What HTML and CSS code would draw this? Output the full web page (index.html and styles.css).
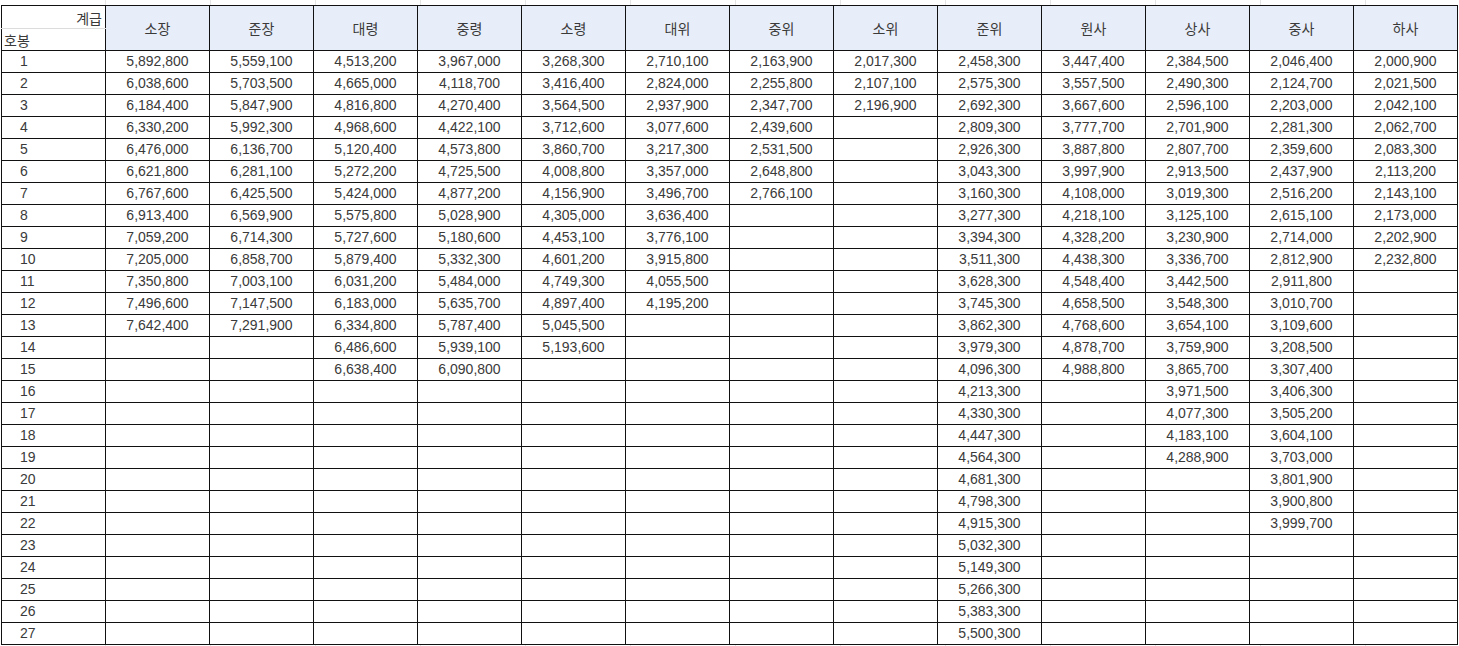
FILE: index.html
```html
<!DOCTYPE html>
<html lang="ko">
<head>
<meta charset="utf-8">
<title>봉급표</title>
<link rel="stylesheet" href="styles.css">
</head>
<body>
<table class="pay">
<colgroup>
<col class="c"><col class="c"><col class="c"><col class="c"><col class="c"><col class="c"><col class="c"><col class="c"><col class="c"><col class="c"><col class="c"><col class="c"><col class="c"><col class="c">
</colgroup>
<thead>
<tr class="h1"><th class="corner-top">계급</th><th rowspan="2">소장</th><th rowspan="2">준장</th><th rowspan="2">대령</th><th rowspan="2">중령</th><th rowspan="2">소령</th><th rowspan="2">대위</th><th rowspan="2">중위</th><th rowspan="2">소위</th><th rowspan="2">준위</th><th rowspan="2">원사</th><th rowspan="2">상사</th><th rowspan="2">중사</th><th rowspan="2">하사</th></tr>
<tr class="h2"><th class="corner-bot">호봉</th></tr>
</thead>
<tbody>
<tr><td class="n">1</td><td>5,892,800</td><td>5,559,100</td><td>4,513,200</td><td>3,967,000</td><td>3,268,300</td><td>2,710,100</td><td>2,163,900</td><td>2,017,300</td><td>2,458,300</td><td>3,447,400</td><td>2,384,500</td><td>2,046,400</td><td>2,000,900</td></tr>
<tr><td class="n">2</td><td>6,038,600</td><td>5,703,500</td><td>4,665,000</td><td>4,118,700</td><td>3,416,400</td><td>2,824,000</td><td>2,255,800</td><td>2,107,100</td><td>2,575,300</td><td>3,557,500</td><td>2,490,300</td><td>2,124,700</td><td>2,021,500</td></tr>
<tr><td class="n">3</td><td>6,184,400</td><td>5,847,900</td><td>4,816,800</td><td>4,270,400</td><td>3,564,500</td><td>2,937,900</td><td>2,347,700</td><td>2,196,900</td><td>2,692,300</td><td>3,667,600</td><td>2,596,100</td><td>2,203,000</td><td>2,042,100</td></tr>
<tr><td class="n">4</td><td>6,330,200</td><td>5,992,300</td><td>4,968,600</td><td>4,422,100</td><td>3,712,600</td><td>3,077,600</td><td>2,439,600</td><td></td><td>2,809,300</td><td>3,777,700</td><td>2,701,900</td><td>2,281,300</td><td>2,062,700</td></tr>
<tr><td class="n">5</td><td>6,476,000</td><td>6,136,700</td><td>5,120,400</td><td>4,573,800</td><td>3,860,700</td><td>3,217,300</td><td>2,531,500</td><td></td><td>2,926,300</td><td>3,887,800</td><td>2,807,700</td><td>2,359,600</td><td>2,083,300</td></tr>
<tr><td class="n">6</td><td>6,621,800</td><td>6,281,100</td><td>5,272,200</td><td>4,725,500</td><td>4,008,800</td><td>3,357,000</td><td>2,648,800</td><td></td><td>3,043,300</td><td>3,997,900</td><td>2,913,500</td><td>2,437,900</td><td>2,113,200</td></tr>
<tr><td class="n">7</td><td>6,767,600</td><td>6,425,500</td><td>5,424,000</td><td>4,877,200</td><td>4,156,900</td><td>3,496,700</td><td>2,766,100</td><td></td><td>3,160,300</td><td>4,108,000</td><td>3,019,300</td><td>2,516,200</td><td>2,143,100</td></tr>
<tr><td class="n">8</td><td>6,913,400</td><td>6,569,900</td><td>5,575,800</td><td>5,028,900</td><td>4,305,000</td><td>3,636,400</td><td></td><td></td><td>3,277,300</td><td>4,218,100</td><td>3,125,100</td><td>2,615,100</td><td>2,173,000</td></tr>
<tr><td class="n">9</td><td>7,059,200</td><td>6,714,300</td><td>5,727,600</td><td>5,180,600</td><td>4,453,100</td><td>3,776,100</td><td></td><td></td><td>3,394,300</td><td>4,328,200</td><td>3,230,900</td><td>2,714,000</td><td>2,202,900</td></tr>
<tr><td class="n">10</td><td>7,205,000</td><td>6,858,700</td><td>5,879,400</td><td>5,332,300</td><td>4,601,200</td><td>3,915,800</td><td></td><td></td><td>3,511,300</td><td>4,438,300</td><td>3,336,700</td><td>2,812,900</td><td>2,232,800</td></tr>
<tr><td class="n">11</td><td>7,350,800</td><td>7,003,100</td><td>6,031,200</td><td>5,484,000</td><td>4,749,300</td><td>4,055,500</td><td></td><td></td><td>3,628,300</td><td>4,548,400</td><td>3,442,500</td><td>2,911,800</td><td></td></tr>
<tr><td class="n">12</td><td>7,496,600</td><td>7,147,500</td><td>6,183,000</td><td>5,635,700</td><td>4,897,400</td><td>4,195,200</td><td></td><td></td><td>3,745,300</td><td>4,658,500</td><td>3,548,300</td><td>3,010,700</td><td></td></tr>
<tr><td class="n">13</td><td>7,642,400</td><td>7,291,900</td><td>6,334,800</td><td>5,787,400</td><td>5,045,500</td><td></td><td></td><td></td><td>3,862,300</td><td>4,768,600</td><td>3,654,100</td><td>3,109,600</td><td></td></tr>
<tr><td class="n">14</td><td></td><td></td><td>6,486,600</td><td>5,939,100</td><td>5,193,600</td><td></td><td></td><td></td><td>3,979,300</td><td>4,878,700</td><td>3,759,900</td><td>3,208,500</td><td></td></tr>
<tr><td class="n">15</td><td></td><td></td><td>6,638,400</td><td>6,090,800</td><td></td><td></td><td></td><td></td><td>4,096,300</td><td>4,988,800</td><td>3,865,700</td><td>3,307,400</td><td></td></tr>
<tr><td class="n">16</td><td></td><td></td><td></td><td></td><td></td><td></td><td></td><td></td><td>4,213,300</td><td></td><td>3,971,500</td><td>3,406,300</td><td></td></tr>
<tr><td class="n">17</td><td></td><td></td><td></td><td></td><td></td><td></td><td></td><td></td><td>4,330,300</td><td></td><td>4,077,300</td><td>3,505,200</td><td></td></tr>
<tr><td class="n">18</td><td></td><td></td><td></td><td></td><td></td><td></td><td></td><td></td><td>4,447,300</td><td></td><td>4,183,100</td><td>3,604,100</td><td></td></tr>
<tr><td class="n">19</td><td></td><td></td><td></td><td></td><td></td><td></td><td></td><td></td><td>4,564,300</td><td></td><td>4,288,900</td><td>3,703,000</td><td></td></tr>
<tr><td class="n">20</td><td></td><td></td><td></td><td></td><td></td><td></td><td></td><td></td><td>4,681,300</td><td></td><td></td><td>3,801,900</td><td></td></tr>
<tr><td class="n">21</td><td></td><td></td><td></td><td></td><td></td><td></td><td></td><td></td><td>4,798,300</td><td></td><td></td><td>3,900,800</td><td></td></tr>
<tr><td class="n">22</td><td></td><td></td><td></td><td></td><td></td><td></td><td></td><td></td><td>4,915,300</td><td></td><td></td><td>3,999,700</td><td></td></tr>
<tr><td class="n">23</td><td></td><td></td><td></td><td></td><td></td><td></td><td></td><td></td><td>5,032,300</td><td></td><td></td><td></td><td></td></tr>
<tr><td class="n">24</td><td></td><td></td><td></td><td></td><td></td><td></td><td></td><td></td><td>5,149,300</td><td></td><td></td><td></td><td></td></tr>
<tr><td class="n">25</td><td></td><td></td><td></td><td></td><td></td><td></td><td></td><td></td><td>5,266,300</td><td></td><td></td><td></td><td></td></tr>
<tr><td class="n">26</td><td></td><td></td><td></td><td></td><td></td><td></td><td></td><td></td><td>5,383,300</td><td></td><td></td><td></td><td></td></tr>
<tr><td class="n">27</td><td></td><td></td><td></td><td></td><td></td><td></td><td></td><td></td><td>5,500,300</td><td></td><td></td><td></td><td></td></tr>
</tbody>
</table>
</body>
</html>
```

FILE: styles.css
```css
html, body {
  margin: 0;
  padding: 0;
}
body {
  background-color: #fff;
  background-image: repeating-linear-gradient(to right, transparent 0, transparent 104px, #e4e4e4 104px, #e4e4e4 105px);
  background-position: 1px 0;
  font-family: "Liberation Sans", Arial, "Noto Sans CJK KR", sans-serif;
  color: #3a3a3a;
  height: 646px;
  overflow: hidden;
}
.pay {
  border-collapse: collapse;
  table-layout: fixed;
  width: 1457px;
  margin: 5px 0 0 1px;
  background: #fff;
}
.pay col.c {
  width: 104px;
}
.pay th,
.pay td {
  border: 1px solid #111;
  padding: 0;
  height: 21px;
  line-height: 21px;
  font-size: 14px;
  font-weight: normal;
  text-align: center;
  white-space: nowrap;
  overflow: hidden;
}
.pay th {
  background: #e8eef9;
  font-family: "Noto Sans CJK KR", "Liberation Sans", sans-serif;
  font-size: 14px;
  color: #3a3a3a;
}
.pay th.corner-top,
.pay th.corner-bot {
  background: #fff;
  font-size: 14px;
}
.pay th.corner-top {
  height: 22px;
  text-align: right;
  padding-right: 3px;
  border-bottom: 1px solid #dcdcdc;
  vertical-align: bottom;
  line-height: 20px;
}
.pay th.corner-bot {
  text-align: left;
  padding-left: 2px;
  border-top: 1px solid #dcdcdc;
  line-height: 20px;
}
.pay td.n {
  text-align: left;
  padding-left: 18px;
}
```
